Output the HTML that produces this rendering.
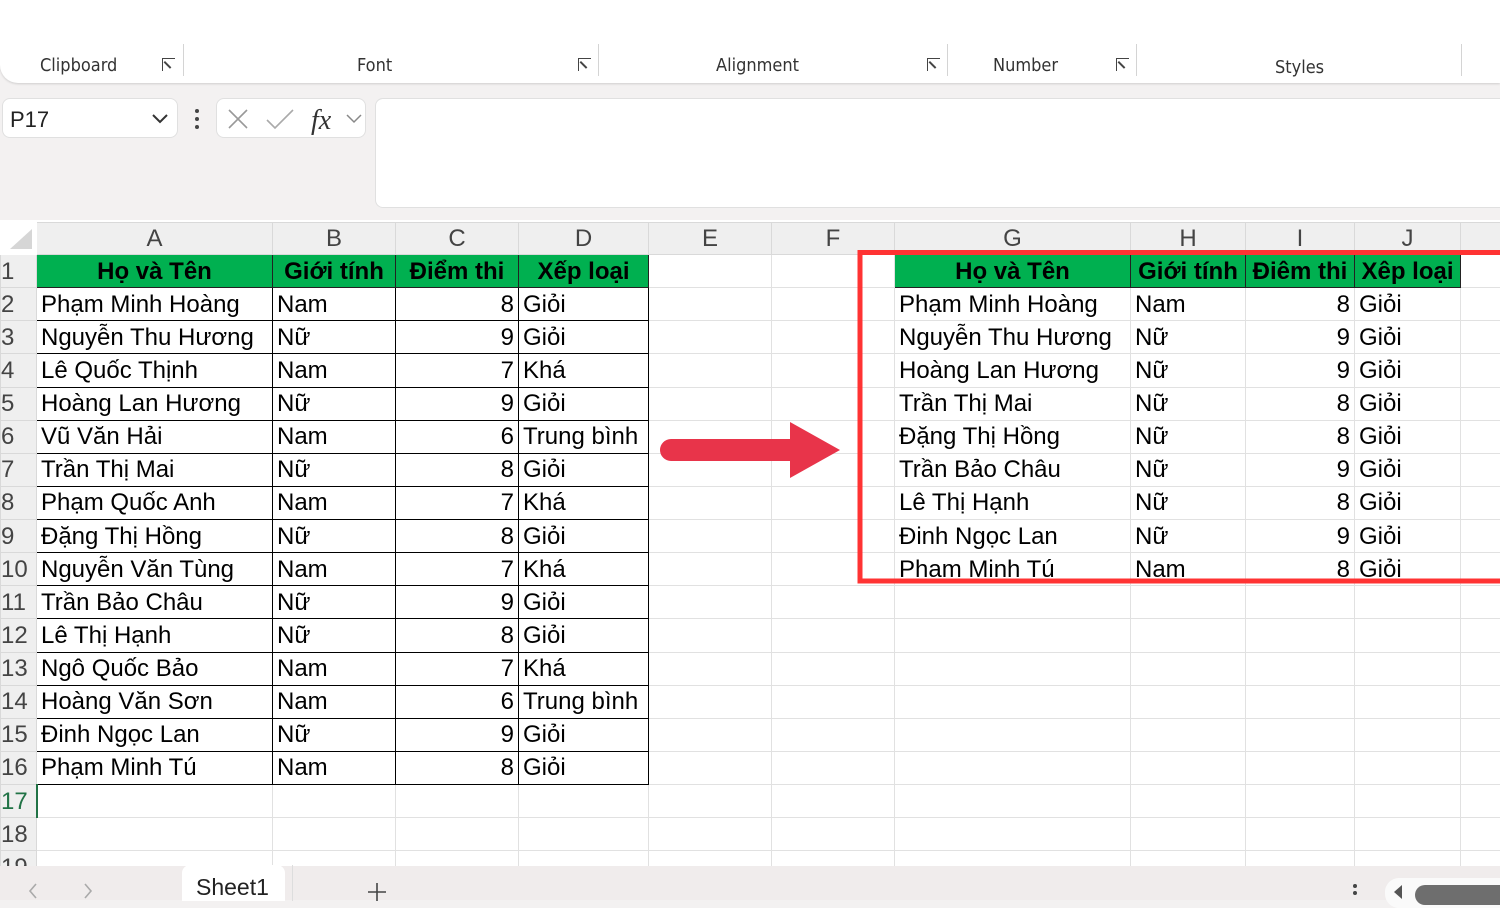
<!DOCTYPE html>
<html><head><meta charset="utf-8">
<style>
*{margin:0;padding:0;box-sizing:border-box}
body{width:1500px;height:900px;overflow:hidden;background:#f3f1f1;font-family:"Liberation Sans",Arial,sans-serif;position:relative}
.ribbon{position:absolute;left:0;top:0;width:1500px;height:83px;background:#fff;border-radius:0 0 0 18px;box-shadow:0 1px 2px rgba(0,0,0,.15)}
.rl{position:absolute;top:55px;font-size:18px;color:#333;font-family:"DejaVu Sans Condensed","Liberation Sans Narrow","Liberation Sans",sans-serif}
.sep{position:absolute;top:44px;width:1px;height:32px;background:#d4d4d4}
.launch{position:absolute;top:58px;width:13px;height:13px;border-left:1.5px solid #444;border-top:1.5px solid #444}
.launch:after{content:"";position:absolute;left:2px;top:2px;width:9px;height:1.5px;background:#444;transform:rotate(45deg);transform-origin:0 0}
.nb{position:absolute;left:2px;top:98px;width:176px;height:40px;background:#fff;border:1px solid #e0e0e0;border-radius:8px;font-size:22px;padding:8px 0 0 7px;color:#222}
.fxb{position:absolute;left:216px;top:98px;width:150px;height:40px;background:#fff;border:1px solid #e0e0e0;border-radius:8px}
.fin{position:absolute;left:375px;top:98px;width:1140px;height:110px;background:#fff;border:1px solid #e0e0e0;border-radius:8px}
.grid{position:absolute;left:0;top:220px;width:1500px;height:646px;background:#fff}
table{position:absolute;left:0;top:222px;width:1520px;border-collapse:collapse;table-layout:fixed;font-size:24px}
td{height:33.125px;border:1px solid #e1e1e1;padding:0 4px;white-space:nowrap;overflow:hidden;line-height:31px;color:#000}
tr.h td{height:31px;background:#efefef;text-align:center;color:#444;border-color:#d9d9d9}
td.rn{background:#efefef;color:#444;padding:0 0 0 0;border-color:#d9d9d9}
td.b{border:1px solid #000}
td.g{background:#00b050;font-weight:bold;text-align:center;border:1px solid #222}
td.r{text-align:right}
.tabs{position:absolute;left:0;top:866px;width:1500px;height:34px;background:#f0ecec}
</style></head><body>
<div class="ribbon">
<div class="rl" style="left:40px">Clipboard</div><div class="launch" style="left:162px"></div><div class="sep" style="left:183px"></div>
<div class="rl" style="left:357px">Font</div><div class="launch" style="left:578px"></div><div class="sep" style="left:598px"></div>
<div class="rl" style="left:716px">Alignment</div><div class="launch" style="left:927px"></div><div class="sep" style="left:947px"></div>
<div class="rl" style="left:993px">Number</div><div class="launch" style="left:1116px"></div><div class="sep" style="left:1136px"></div>
<div class="rl" style="left:1275px;top:57px">Styles</div><div class="sep" style="left:1461px"></div>
</div>
<div class="nb">P17<svg style="position:absolute;left:148px;top:14px" width="18" height="12"><path d="M2 2 L9 9 L16 2" fill="none" stroke="#333" stroke-width="2"/></svg></div>
<svg style="position:absolute;left:193px;top:108px" width="8" height="22"><circle cx="4" cy="3" r="2" fill="#444"/><circle cx="4" cy="11" r="2" fill="#444"/><circle cx="4" cy="19" r="2" fill="#444"/></svg>
<div class="fxb"><svg width="150" height="40"><path d="M12 11 L30 29 M30 11 L12 29" stroke="#999" stroke-width="1.6"/><path d="M50 21 L58 29 L76 11" fill="none" stroke="#aaa" stroke-width="1.6"/><text x="94" y="30" font-family="Liberation Serif" font-style="italic" font-size="28" fill="#333">fx</text><path d="M130 16 L137 23 L144 16" fill="none" stroke="#888" stroke-width="1.5"/></svg></div>
<div class="fin"></div>
<div class="grid"></div>
<svg style="position:absolute;left:8px;top:227px" width="26" height="24"><path d="M24 2 L24 22 L2 22 Z" fill="#d6d6d6"/></svg>
<table>
<colgroup><col style="width:36px"><col style="width:236px"><col style="width:123px"><col style="width:123px"><col style="width:130px"><col style="width:123px"><col style="width:123px"><col style="width:236px"><col style="width:115px"><col style="width:109px"><col style="width:106px"><col style="width:60px"></colgroup>
<tr class="h"><td style="background:transparent;border-color:transparent"></td><td>A</td><td>B</td><td>C</td><td>D</td><td>E</td><td>F</td><td>G</td><td>H</td><td>I</td><td>J</td><td></td></tr>
<tr><td class="rn">1</td><td class="g">Họ và Tên</td><td class="g">Giới tính</td><td class="g">Điểm thi</td><td class="g">Xếp loại</td><td></td><td></td><td class="g">Họ và Tên</td><td class="g">Giới tính</td><td class="g">Điêm thi</td><td class="g">Xêp loại</td><td></td></tr>
<tr><td class="rn">2</td><td class="b">Phạm Minh Hoàng</td><td class="b">Nam</td><td class="b r">8</td><td class="b">Giỏi</td><td></td><td></td><td>Phạm Minh Hoàng</td><td>Nam</td><td class="r">8</td><td>Giỏi</td><td></td></tr>
<tr><td class="rn">3</td><td class="b">Nguyễn Thu Hương</td><td class="b">Nữ</td><td class="b r">9</td><td class="b">Giỏi</td><td></td><td></td><td>Nguyễn Thu Hương</td><td>Nữ</td><td class="r">9</td><td>Giỏi</td><td></td></tr>
<tr><td class="rn">4</td><td class="b">Lê Quốc Thịnh</td><td class="b">Nam</td><td class="b r">7</td><td class="b">Khá</td><td></td><td></td><td>Hoàng Lan Hương</td><td>Nữ</td><td class="r">9</td><td>Giỏi</td><td></td></tr>
<tr><td class="rn">5</td><td class="b">Hoàng Lan Hương</td><td class="b">Nữ</td><td class="b r">9</td><td class="b">Giỏi</td><td></td><td></td><td>Trần Thị Mai</td><td>Nữ</td><td class="r">8</td><td>Giỏi</td><td></td></tr>
<tr><td class="rn">6</td><td class="b">Vũ Văn Hải</td><td class="b">Nam</td><td class="b r">6</td><td class="b">Trung bình</td><td></td><td></td><td>Đặng Thị Hồng</td><td>Nữ</td><td class="r">8</td><td>Giỏi</td><td></td></tr>
<tr><td class="rn">7</td><td class="b">Trần Thị Mai</td><td class="b">Nữ</td><td class="b r">8</td><td class="b">Giỏi</td><td></td><td></td><td>Trần Bảo Châu</td><td>Nữ</td><td class="r">9</td><td>Giỏi</td><td></td></tr>
<tr><td class="rn">8</td><td class="b">Phạm Quốc Anh</td><td class="b">Nam</td><td class="b r">7</td><td class="b">Khá</td><td></td><td></td><td>Lê Thị Hạnh</td><td>Nữ</td><td class="r">8</td><td>Giỏi</td><td></td></tr>
<tr><td class="rn">9</td><td class="b">Đặng Thị Hồng</td><td class="b">Nữ</td><td class="b r">8</td><td class="b">Giỏi</td><td></td><td></td><td>Đinh Ngọc Lan</td><td>Nữ</td><td class="r">9</td><td>Giỏi</td><td></td></tr>
<tr><td class="rn">10</td><td class="b">Nguyễn Văn Tùng</td><td class="b">Nam</td><td class="b r">7</td><td class="b">Khá</td><td></td><td></td><td>Phạm Minh Tú</td><td>Nam</td><td class="r">8</td><td>Giỏi</td><td></td></tr>
<tr><td class="rn">11</td><td class="b">Trần Bảo Châu</td><td class="b">Nữ</td><td class="b r">9</td><td class="b">Giỏi</td><td></td><td></td><td></td><td></td><td></td><td></td><td></td></tr>
<tr><td class="rn">12</td><td class="b">Lê Thị Hạnh</td><td class="b">Nữ</td><td class="b r">8</td><td class="b">Giỏi</td><td></td><td></td><td></td><td></td><td></td><td></td><td></td></tr>
<tr><td class="rn">13</td><td class="b">Ngô Quốc Bảo</td><td class="b">Nam</td><td class="b r">7</td><td class="b">Khá</td><td></td><td></td><td></td><td></td><td></td><td></td><td></td></tr>
<tr><td class="rn">14</td><td class="b">Hoàng Văn Sơn</td><td class="b">Nam</td><td class="b r">6</td><td class="b">Trung bình</td><td></td><td></td><td></td><td></td><td></td><td></td><td></td></tr>
<tr><td class="rn">15</td><td class="b">Đinh Ngọc Lan</td><td class="b">Nữ</td><td class="b r">9</td><td class="b">Giỏi</td><td></td><td></td><td></td><td></td><td></td><td></td><td></td></tr>
<tr><td class="rn">16</td><td class="b">Phạm Minh Tú</td><td class="b">Nam</td><td class="b r">8</td><td class="b">Giỏi</td><td></td><td></td><td></td><td></td><td></td><td></td><td></td></tr>
<tr><td class="rn" style="color:#217346;border-right:2px solid #217346">17</td><td></td><td></td><td></td><td></td><td></td><td></td><td></td><td></td><td></td><td></td><td></td></tr>
<tr><td class="rn">18</td><td></td><td></td><td></td><td></td><td></td><td></td><td></td><td></td><td></td><td></td><td></td></tr>
<tr><td class="rn">19</td><td></td><td></td><td></td><td></td><td></td><td></td><td></td><td></td><td></td><td></td><td></td></tr>
</table>
<svg style="position:absolute;left:0;top:0" width="1500" height="900">
<rect x="860" y="252.5" width="700" height="328.5" fill="none" stroke="#ff3333" stroke-width="5"/>
<path d="M671 439 L790 439 L790 422 L840 450 L790 478 L790 461 L671 461 A11 11 0 0 1 671 439 Z" fill="#e8344a"/>
</svg>
<div class="tabs">
<svg style="position:absolute;left:25px;top:16px" width="80" height="18"><path d="M11 2 L5 9 L11 16" fill="none" stroke="#aaa" stroke-width="1.6"/><path d="M60 2 L66 9 L60 16" fill="none" stroke="#aaa" stroke-width="1.6"/></svg>
<div style="position:absolute;left:182px;top:-1px;width:103px;height:36px;background:#fff;border-radius:8px 8px 0 0;font-size:23px;padding:9px 0 0 14px;color:#222">Sheet1</div>
<div style="position:absolute;left:292px;top:-1px;width:1100px;height:36px;border-left:1px solid #ddd"></div>
<svg style="position:absolute;left:366px;top:15px" width="22" height="20"><path d="M11 2 V20 M2 11 H20" stroke="#444" stroke-width="1.6"/></svg>
<svg style="position:absolute;left:1352px;top:16px" width="6" height="18"><circle cx="3" cy="4" r="2" fill="#444"/><circle cx="3" cy="11" r="2" fill="#444"/></svg>
<div style="position:absolute;left:1385px;top:12px;width:130px;height:30px;background:#fafafa;border-radius:14px"></div>
<svg style="position:absolute;left:1392px;top:18px" width="12" height="16"><path d="M10 1 L2 8 L10 15 Z" fill="#555"/></svg>
<div style="position:absolute;left:1415px;top:19px;width:100px;height:20px;background:#6e6e6e;border-radius:10px"></div>
</div>
</body></html>
